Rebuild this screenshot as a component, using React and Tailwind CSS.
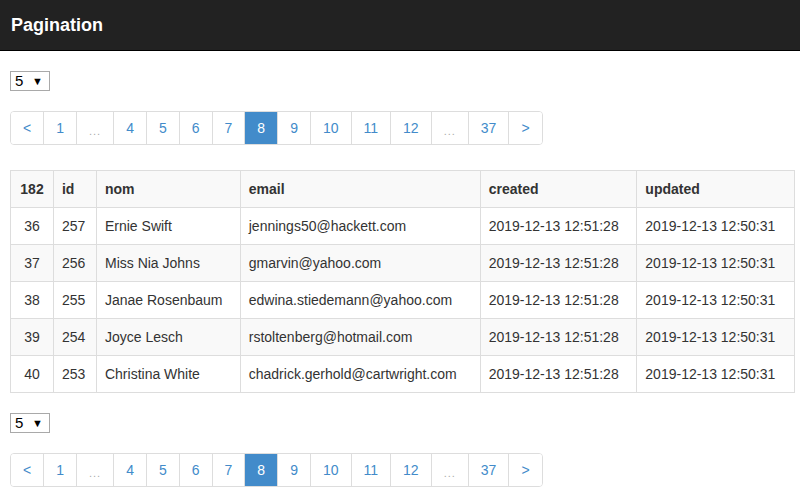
import React from "react";

const rows = [
  { n: 36, id: 257, nom: "Ernie Swift", email: "jennings50@hackett.com" },
  { n: 37, id: 256, nom: "Miss Nia Johns", email: "gmarvin@yahoo.com" },
  { n: 38, id: 255, nom: "Janae Rosenbaum", email: "edwina.stiedemann@yahoo.com" },
  { n: 39, id: 254, nom: "Joyce Lesch", email: "rstoltenberg@hotmail.com" },
  { n: 40, id: 253, nom: "Christina White", email: "chadrick.gerhold@cartwright.com" },
];

const pages = ["<", "1", "...", "4", "5", "6", "7", "8", "9", "10", "11", "12", "...", "37", ">"];

function PageSelect() {
  return (
    <div className="flex h-[20px] w-[40px] items-center justify-between border border-[#a9a9a9] bg-white pl-[4px] pr-[6px] text-[15px] text-black">
      <span>5</span>
      <span className="text-[11px]">▼</span>
    </div>
  );
}

function Pager() {
  return (
    <div className="inline-flex rounded-[4px] border border-[#ddd]">
      {pages.map((p, i) => {
        const active = p === "8";
        const dots = p === "...";
        return (
          <div
            key={i}
            className={
              "flex h-[32px] items-center justify-center px-[12px] leading-[20px] " +
              (i > 0 ? "border-l border-[#ddd] " : "") +
              (active
                ? "bg-[#428bca] text-white "
                : dots
                ? "bg-white text-[#aaa] text-[14px] "
                : "bg-white text-[#428bca] ") +
              (i === 0 ? "rounded-l-[3px] " : "") +
              (i === pages.length - 1 ? "rounded-r-[3px]" : "")
            }
          >
            {dots ? <span className="relative top-[3px] text-[11px] tracking-[1px]">...</span> : p}
          </div>
        );
      })}
    </div>
  );
}

export default function App() {
  return (
    <div className="min-h-screen bg-white text-[14px] text-[#333] font-['Liberation_Sans',Arial,sans-serif]">
      <div className="flex h-[51px] items-center border-b border-black bg-[#222] px-[11px]">
        <h1 className="text-[18px] font-bold text-white">Pagination</h1>
      </div>

      <div className="px-[10px]">
        <div className="mt-[20px]">
          <PageSelect />
        </div>
        <div className="mt-[20px]">
          <Pager />
        </div>

        <table className="mt-[25px] w-[785px] border-collapse border border-[#ddd]">
          <colgroup>
            <col className="w-[43px]" />
            <col className="w-[43px]" />
            <col className="w-[144px]" />
            <col className="w-[240px]" />
            <col className="w-[157px]" />
            <col className="w-[158px]" />
          </colgroup>
          <tbody>
            <tr className="bg-[#f9f9f9] font-bold">
              <td className="h-[37px] border border-[#ddd] px-[8px] text-center">182</td>
              <td className="border border-[#ddd] px-[8px]">id</td>
              <td className="border border-[#ddd] px-[8px]">nom</td>
              <td className="border border-[#ddd] px-[8px]">email</td>
              <td className="border border-[#ddd] px-[8px]">created</td>
              <td className="border border-[#ddd] px-[8px]">updated</td>
            </tr>
            {rows.map((r, i) => (
              <tr key={r.n} className={i % 2 === 1 ? "bg-[#f9f9f9]" : "bg-white"}>
                <td className="h-[37px] border border-[#ddd] px-[8px] text-center">{r.n}</td>
                <td className="border border-[#ddd] px-[8px]">{r.id}</td>
                <td className="border border-[#ddd] px-[8px]">{r.nom}</td>
                <td className="border border-[#ddd] px-[8px]">{r.email}</td>
                <td className="border border-[#ddd] px-[8px]">2019-12-13 12:51:28</td>
                <td className="border border-[#ddd] px-[8px]">2019-12-13 12:50:31</td>
              </tr>
            ))}
          </tbody>
        </table>

        <div className="mt-[20px]">
          <PageSelect />
        </div>
        <div className="mt-[20px]">
          <Pager />
        </div>
      </div>
    </div>
  );
}
